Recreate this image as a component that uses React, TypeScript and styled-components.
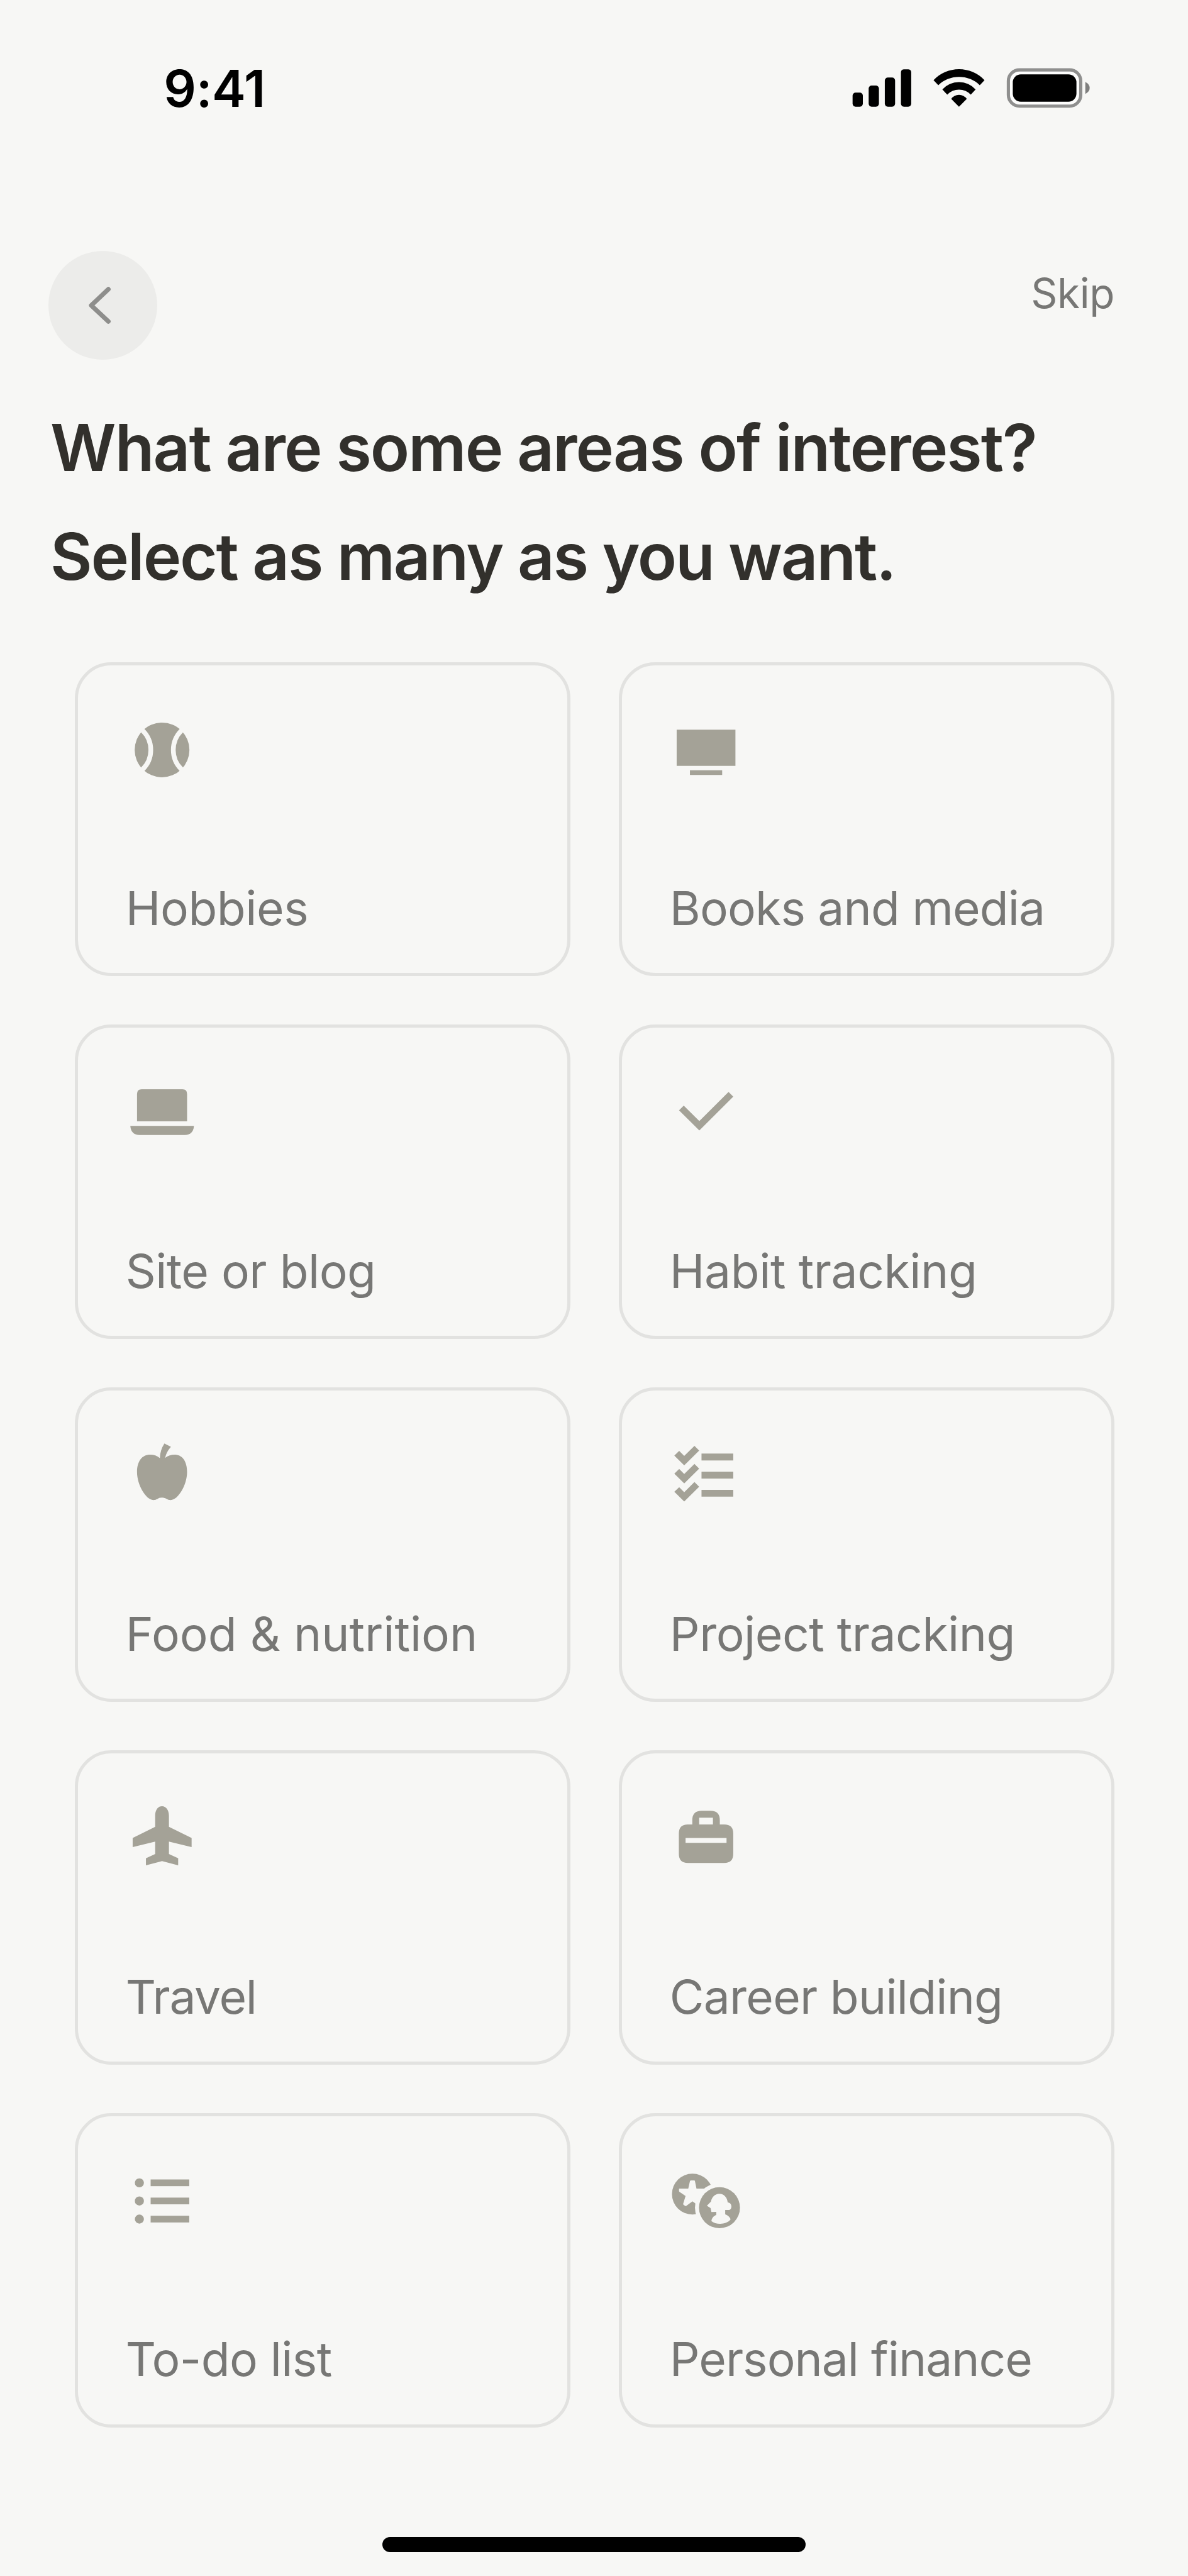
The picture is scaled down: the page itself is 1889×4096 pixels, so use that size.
import React from 'react';
import styled, { createGlobalStyle } from 'styled-components';

// Design units: 6 units per point on a 393pt wide device.
const SCALE = 1889 / 2358;
const u = (n: number) => `${+(n * SCALE).toFixed(3)}px`;

const color = {
  bg: '#f7f7f5',
  icon: '#a4a297',
  label: '#777775',
  line: '#e2e2e0',
  heading: '#32302c',
};

const GlobalStyle = createGlobalStyle`
  *, *::before, *::after { box-sizing: border-box; }
  body { margin: 0; background: ${color.bg}; }
`;

const Screen = styled.main`
  display: flex;
  flex-direction: column;
  width: 1889px;
  height: 4096px;
  overflow: hidden;
  background: ${color.bg};
  font-family: Inter, "Liberation Sans", sans-serif;
`;

const StatusBar = styled.div`
  display: flex;
  justify-content: space-between;
  align-items: flex-start;
  flex: none;
  height: ${u(498)};
  padding: ${u(116)} ${u(195)} 0 ${u(325)};
`;

const Time = styled.div`
  font-size: ${u(101)};
  line-height: ${u(120)};
  font-weight: 600;
  letter-spacing: ${u(-0.5)};
  color: #000;
`;

const StatusIcons = styled.svg`
  display: block;
  width: ${u(472)};
  height: ${u(80)};
  margin-top: ${u(19)};
`;

const Header = styled.header`
  display: flex;
  justify-content: space-between;
  align-items: flex-start;
  flex: none;
  height: ${u(216)};
  padding: 0 ${u(146)} 0 ${u(96)};
`;

const BackButton = styled.button`
  display: flex;
  width: ${u(216)};
  height: ${u(216)};
  padding: 0;
  border: 0;
  border-radius: 50%;
  background: #ececea;

  svg {
    display: block;
    width: 100%;
    height: 100%;
  }
`;

const SkipButton = styled.button`
  margin: ${u(34)} 0 0;
  padding: 0;
  border: 0;
  background: none;
  font-family: inherit;
  font-size: ${u(82)};
  line-height: ${u(100)};
  letter-spacing: ${u(-0.5)};
  color: ${color.label};
`;

const Heading = styled.h1`
  flex: none;
  margin: ${u(67)} 0 ${u(101)};
  padding-left: ${u(100)};
  font-size: ${u(128)};
  line-height: ${u(216)};
  font-weight: 600;
  color: ${color.heading};
  white-space: nowrap;
`;

const HeadingLine = styled.span<{ $tracking: number }>`
  display: block;
  letter-spacing: ${(p) => u(p.$tracking)};
`;

const Grid = styled.div`
  display: grid;
  flex: none;
  grid-template-columns: repeat(2, ${u(984)});
  grid-auto-rows: ${u(624)};
  gap: ${u(96)};
  padding-left: ${u(148)};
`;

const Card = styled.button`
  display: flex;
  flex-direction: column;
  justify-content: space-between;
  align-items: flex-start;
  padding: ${u(96)} ${u(90)} ${u(73)} ${u(95)};
  border: 5px solid ${color.line};
  border-radius: ${u(72)};
  background: transparent;
  font-family: inherit;
  text-align: left;
`;

const CardIcon = styled.svg`
  display: block;
  width: ${u(144)};
  height: ${u(144)};
  fill: ${color.icon};
`;

const CardLabel = styled.span<{ $tracking: number }>`
  font-size: ${u(93.5)};
  line-height: ${u(112)};
  letter-spacing: ${(p) => u(p.$tracking)};
  color: ${color.label};
  white-space: nowrap;
`;

const Footer = styled.footer`
  display: flex;
  flex: 1;
  justify-content: center;
  align-items: flex-end;
  padding-bottom: ${u(48)};
`;

const HomeIndicator = styled.div`
  width: ${u(840)};
  height: ${u(30)};
  border-radius: ${u(15)};
  background: #000;
`;

const icons = {
  ball: (
    <>
      <circle cx="276" cy="263" r="163" />
      <g fill="none" stroke={color.bg} strokeWidth="28">
        <circle cx="47" cy="263" r="162" />
        <circle cx="505" cy="263" r="162" />
      </g>
    </>
  ),
  screen: <path d="M101 143H451V358H101ZM180 384H372V412H180Z" />,
  laptop: (
    <path d="M127 318V155Q127 127 155 127H397Q425 127 425 155V318ZM87 345H466Q462 399 410 399H143Q91 399 87 345Z" />
  ),
  check: <path d="M115 252L143 224L236 316L410 143L438 171L236 372Z" />,
  apple: (
    <path d="M290 75L329 95Q302 125 294 161C312 147 330 142 350 142C396 142 425 180 425 245C425 325 370 412 328 412C306 412 300 397 276 397C252 397 248 412 224 412C182 412 127 325 127 245C127 180 158 142 205 142C228 142 246 149 263 162Q264 115 290 75Z" />
  ),
  checklist: (
    <>
      {[0, 108, 216].map((y) => (
        <path
          key={y}
          transform={`translate(0 ${y})`}
          d="M87 147L116 119L146 149L207 89L235 117L146 205ZM249 135H438V176H249Z"
        />
      ))}
    </>
  ),
  plane: (
    <path d="M235 130C235 98 252 74 276 74C300 74 317 98 317 130V197L452 263V318L317 285V359L372 384V426L276 401L180 426V384L235 359V285L101 318V263L235 197Z" />
  ),
  briefcase: (
    <path
      fillRule="evenodd"
      d="M194 183V157Q194 101 250 101H303Q358 101 358 157V183H384Q438 183 438 237V358Q438 412 384 412H168Q114 412 114 358V237Q114 183 168 183ZM235 183H317V143H235ZM154 263V292H398V263Z"
    />
  ),
  list: (
    <>
      {[156, 264, 372].map((y) => (
        <g key={y}>
          <circle cx="141" cy={y} r="27" />
          <rect x="208" y={y - 20} width="230" height="40" />
        </g>
      ))}
    </>
  ),
  coins: (
    <>
      <circle cx="195" cy="223" r="122" />
      <g fill={color.bg}>
        <path d="M186 142H206Q209 142 210 146L219 190H262L290 220L225 290L212 278L195 266L157 294Q153 296 150 292L141 286Q139 283 140 280L154 234L118 210Q115 207 115 203V190H170L180 146Q182 142 186 142Z" />
        <circle cx="356" cy="304" r="146" />
      </g>
      <circle cx="356" cy="304" r="122" />
      <path
        fill={color.bg}
        d="M305 268C310 240 330 221 355 221C383 221 402 243 405 273C419 275 427 284 427 297C427 310 420 318 410 318H390V344C404 349 418 358 422 374C396 408 334 406 308 384C310 366 322 353 337 348V329L308 330L303 306L281 292Z"
      />
    </>
  ),
};

type Area = { icon: keyof typeof icons; label: string; tracking: number };

const areas: Area[] = [
  { icon: 'ball', label: 'Hobbies', tracking: -0.5 },
  { icon: 'screen', label: 'Books and media', tracking: -1.05 },
  { icon: 'laptop', label: 'Site or blog', tracking: -0.6 },
  { icon: 'check', label: 'Habit tracking', tracking: -0.5 },
  { icon: 'apple', label: 'Food & nutrition', tracking: 0 },
  { icon: 'checklist', label: 'Project tracking', tracking: -0.6 },
  { icon: 'plane', label: 'Travel', tracking: -1.6 },
  { icon: 'briefcase', label: 'Career building', tracking: -0.95 },
  { icon: 'list', label: 'To-do list', tracking: -0.75 },
  { icon: 'coins', label: 'Personal finance', tracking: -1.25 },
];

export default function App() {
  return (
    <>
      <GlobalStyle />
      <Screen>
        <StatusBar>
          <Time>9:41</Time>
          <StatusIcons viewBox="51 35 472 80">
            <rect x="51.8" y="84" width="20.4" height="28" rx="6" />
            <rect x="83.7" y="70" width="20.4" height="42" rx="6" />
            <rect x="115.8" y="54" width="20.4" height="58" rx="6" />
            <rect x="147.8" y="37.7" width="20.4" height="74.3" rx="6" />
            <path d="M212.5 59.3A69.8 69.8 0 0 1 313.7 59.3L304.3 69.3A59.2 59.2 0 0 0 222 69.3Z" />
            <path d="M230 77.7A44.4 44.4 0 0 1 296 77.7L286.5 88A32.4 32.4 0 0 0 239.7 88Z" />
            <path d="M247.6 96.5A18.9 18.9 0 0 1 278.5 96.5L263 112Z" />
            <rect x="361.1" y="38.9" width="143.6" height="71.9" rx="22" fill="#fdfdfc" stroke="#8f8f8e" strokeWidth="6.4" />
            <rect x="369.8" y="47.8" width="126.4" height="54.2" rx="16" />
            <path d="M513.8 62.7Q522.5 67 522.5 74.7T513.8 86.7Z" fill="#7f7f7e" />
          </StatusIcons>
        </StatusBar>

        <Header>
          <BackButton aria-label="Back">
            <svg viewBox="0 0 216 216" fill="none">
              <path d="M119 76L85 108L119 140" stroke="#8e8e8c" strokeWidth="9" strokeLinecap="round" strokeLinejoin="round" />
            </svg>
          </BackButton>
          <SkipButton>Skip</SkipButton>
        </Header>

        <Heading>
          <HeadingLine $tracking={-2.45}>What are some areas of interest?</HeadingLine>
          <HeadingLine $tracking={-2.75}>Select as many as you want.</HeadingLine>
        </Heading>

        <Grid>
          {areas.map((area) => (
            <Card key={area.label}>
              <CardIcon viewBox="60 48 432 432">{icons[area.icon]}</CardIcon>
              <CardLabel $tracking={area.tracking}>{area.label}</CardLabel>
            </Card>
          ))}
        </Grid>

        <Footer>
          <HomeIndicator />
        </Footer>
      </Screen>
    </>
  );
}
